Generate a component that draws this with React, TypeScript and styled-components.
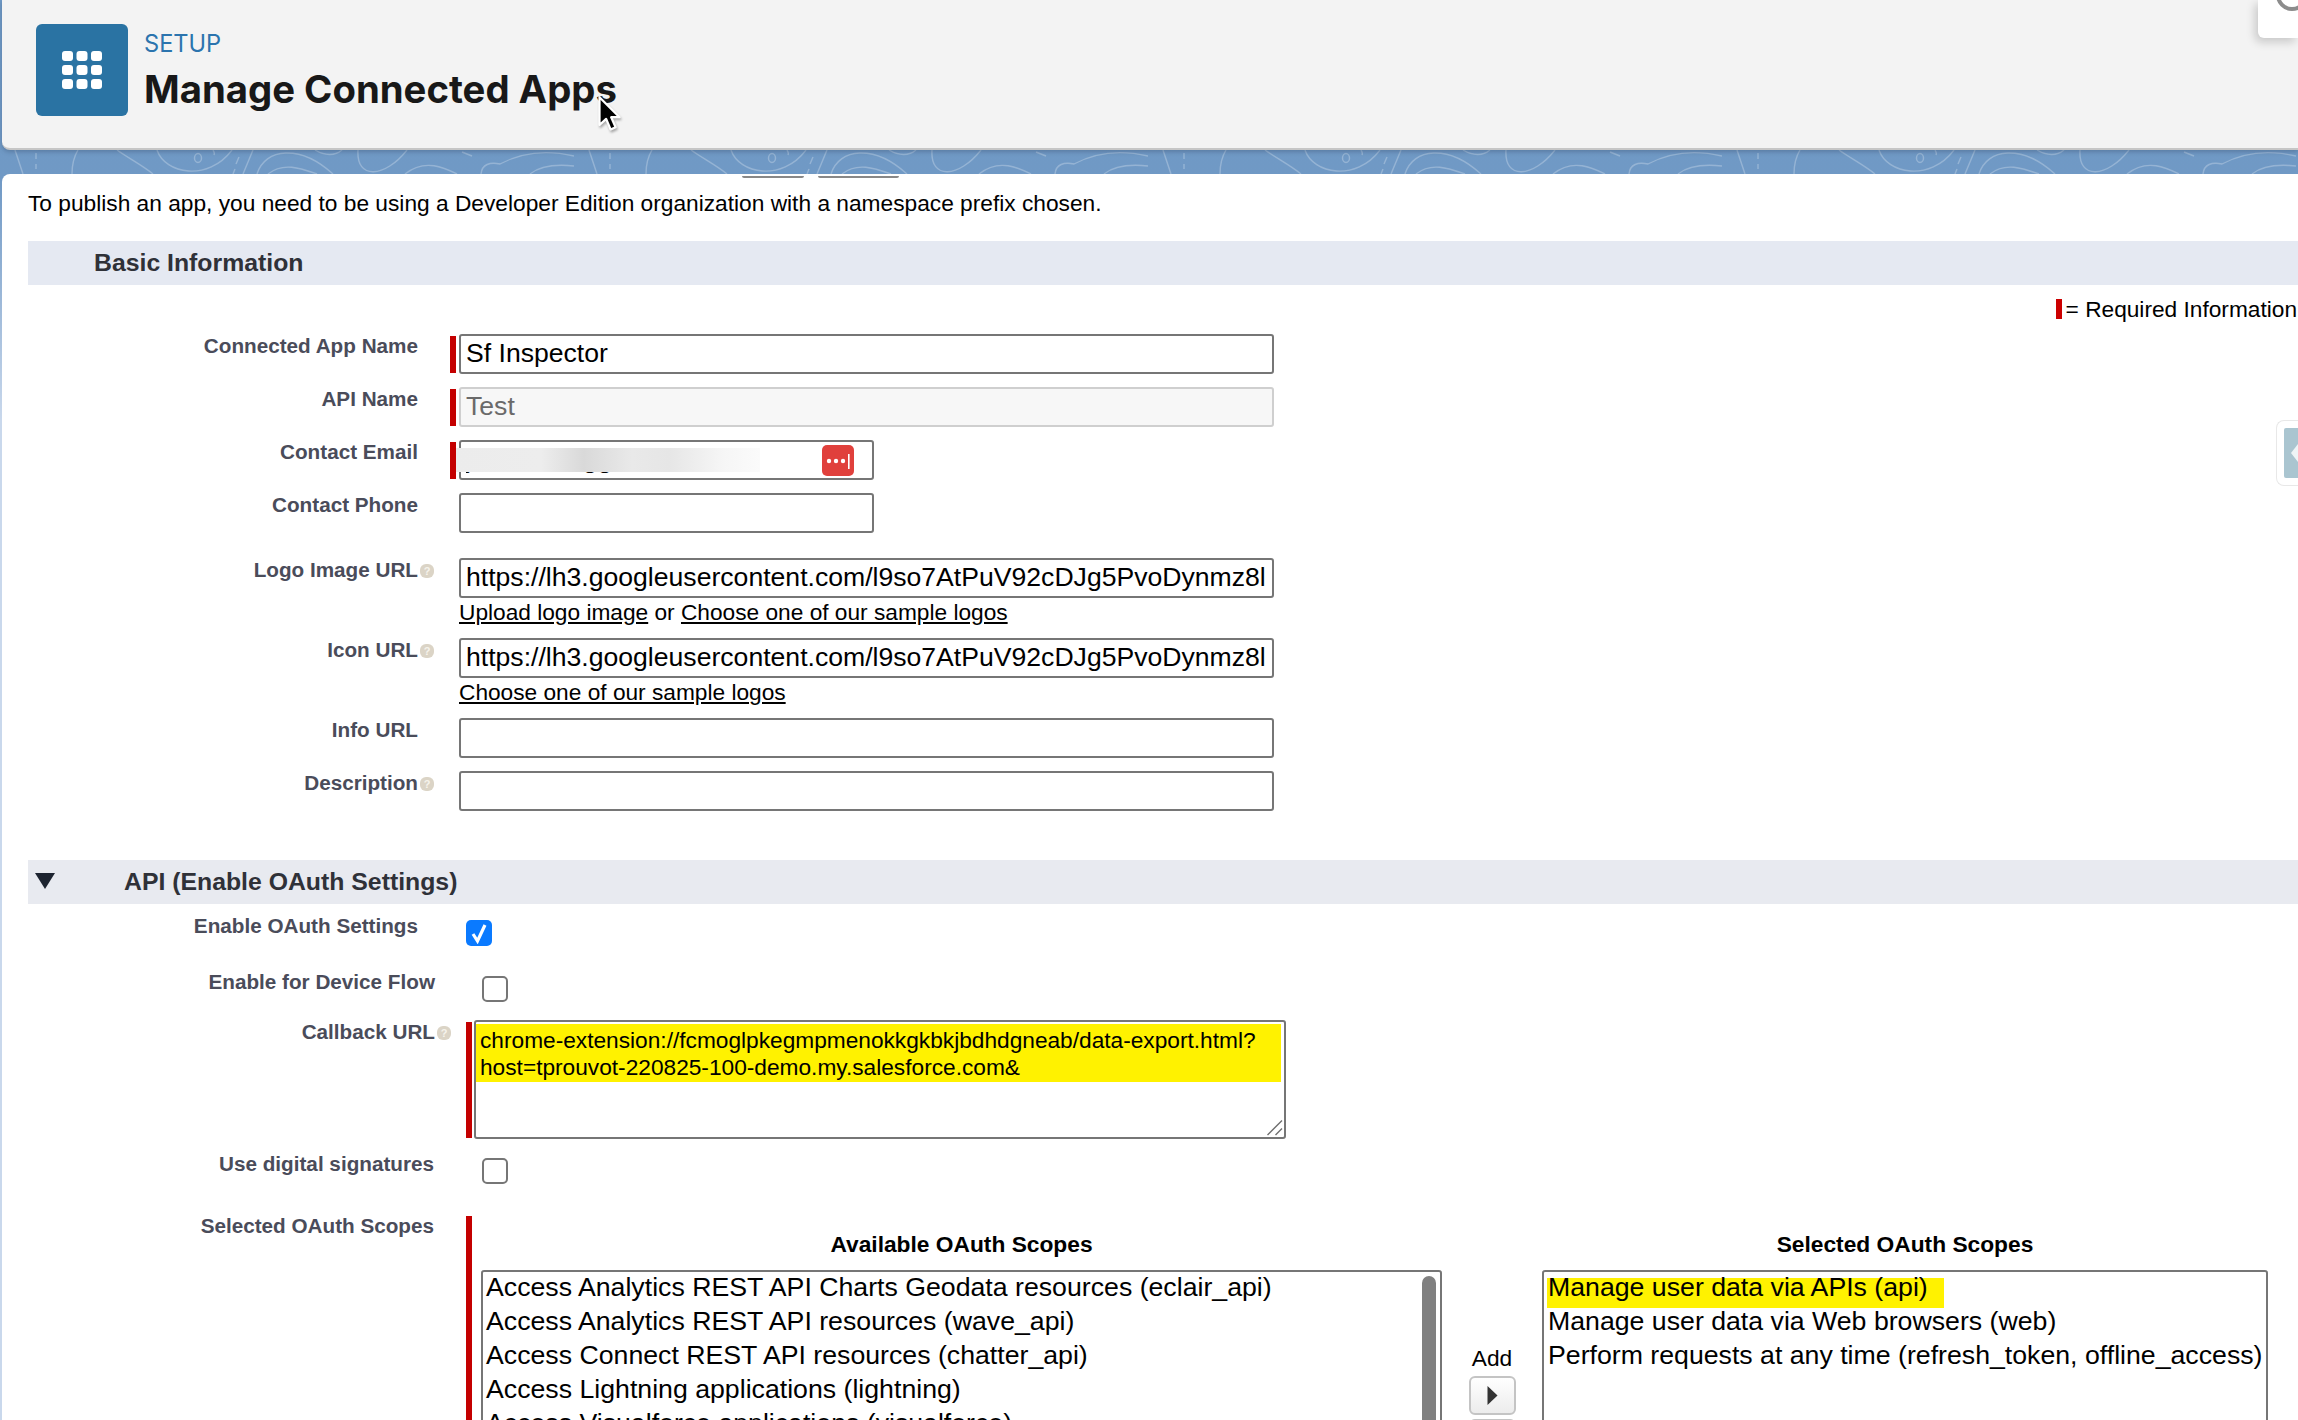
import React from "react";
import styled, { createGlobalStyle } from "styled-components";

const Global = createGlobalStyle`
  html, body { margin: 0; padding: 0; }
  body { font-family: "Liberation Sans", Arial, sans-serif; color: #000; overflow: hidden; }
  * { box-sizing: border-box; }
`;

const Page = styled.div`
  position: relative;
  width: 2298px;
  height: 1420px;
  overflow: hidden;
  background: linear-gradient(#6f9ac6 0, #7099c5 180px, #c9d8ec 420px);
`;

const HeaderCard = styled.header`
  position: relative;
  z-index: 1;
  display: flex;
  align-items: flex-start;
  gap: 16px;
  height: 150px;
  margin-left: 2px;
  padding: 24px 34px;
  background: #f3f3f3;
  border-bottom: 2px solid #c6c6c6;
  border-bottom-left-radius: 8px;
  box-shadow: 0 2px 4px rgba(50, 70, 100, 0.35);
`;

const AppTile = styled.div`
  display: flex;
  align-items: center;
  justify-content: center;
  width: 92px;
  height: 92px;
  border-radius: 6px;
  background: #2a73a3;
`;

const TitleBlock = styled.div`
  display: flex;
  flex-direction: column;
`;

const Eyebrow = styled.div`
  font-family: Inter, "Liberation Sans", sans-serif;
  font-size: 23.6px;
  font-weight: 400;
  line-height: 28px;
  margin-top: 6px;
  color: #2b74ae;
`;

const PageTitle = styled.h1`
  margin: 7px 0 0;
  font-family: Inter, "Liberation Sans", sans-serif;
  font-size: 38.3px;
  line-height: 48px;
  font-weight: 700;
  color: #181818;
`;

const CornerCard = styled.div`
  position: absolute;
  top: 0;
  right: 0;
  width: 40px;
  height: 38px;
  background: #fff;
  border-bottom-left-radius: 6px;
  box-shadow: -3px 4px 10px rgba(0, 0, 0, 0.18);
  overflow: hidden;
`;

const Cursor = styled.svg`
  position: absolute;
  left: 594px;
  top: 95px;
  filter: drop-shadow(1px 2px 1px rgba(0, 0, 0, 0.3));
`;

const Strip = styled.svg`
  display: block;
  width: 100%;
  height: 24px;
`;

const Panel = styled.main`
  position: relative;
  height: 1246px;
  margin-left: 2px;
  padding-left: 26px;
  background: #fff;
  border-top-left-radius: 8px;
`;

const StubRow = styled.div`
  display: flex;
  gap: 14px;
  height: 4px;
  padding: 2px 0 0 714px;
`;

const Stub = styled.div<{ $w: number }>`
  width: ${(p) => p.$w}px;
  height: 2px;
  background: #888;
  border-radius: 0 0 3px 3px;
`;

const Intro = styled.p`
  margin: 10px 0 0;
  font-size: 22.72px;
  line-height: 31px;
`;

const SectionBar = styled.div<{ $gap: number; $tone: string; $top: number }>`
  display: flex;
  align-items: center;
  height: 44px;
  margin-top: ${(p) => p.$top}px;
  padding-left: ${(p) => p.$gap}px;
  background: ${(p) => p.$tone};
`;

const SectionTitle = styled.h2`
  margin: 0;
  font-size: 24.8px;
  line-height: 30px;
  font-weight: 700;
  color: #2f3138;
`;

const Twist = styled.svg`
  margin: -2px 69px 0 -89px;
`;

const Required = styled.div`
  display: flex;
  align-items: center;
  justify-content: flex-end;
  gap: 4px;
  height: 24px;
  margin-top: 12px;
  padding-right: 1px;
  font-size: 22.7px;
`;

const RequiredMark = styled.span`
  width: 6px;
  height: 20px;
  background: #cc0000;
`;

const Row = styled.div<{ $top: number }>`
  display: flex;
  align-items: flex-start;
  margin-top: ${(p) => p.$top}px;
`;

const Label = styled.label<{ $w: number }>`
  flex: none;
  width: ${(p) => p.$w}px;
  text-align: right;
  font-size: 20.7px;
  line-height: 24px;
  font-weight: 700;
  color: #4a4c5a;
`;

const HelpSlot = styled.div<{ $w: number }>`
  flex: none;
  width: ${(p) => p.$w}px;
  padding: 6px 0 0 2px;
`;

const Help = styled.span`
  display: flex;
  align-items: center;
  justify-content: center;
  width: 14px;
  height: 14px;
  border-radius: 6px;
  background: #dbd4c6;
  color: #f6f3ec;
  font-size: 11px;
  font-weight: 700;
`;

const Marker = styled.div<{ $on?: boolean; $h: number; $top?: number }>`
  flex: none;
  width: 6px;
  height: ${(p) => p.$h}px;
  margin-top: ${(p) => p.$top ?? 2}px;
  background: ${(p) => (p.$on === false ? "transparent" : "#c40000")};
`;

const Field = styled.div<{ $left?: number }>`
  position: relative;
  margin-left: ${(p) => p.$left ?? 3}px;
`;

const TextInput = styled.input<{ $w: number }>`
  display: block;
  width: ${(p) => p.$w}px;
  height: 40px;
  padding: 0 5px 2px;
  border: 2px solid #767676;
  border-radius: 3px;
  background: #fff;
  font-family: "Liberation Sans", Arial, sans-serif;
  font-size: 26.6px;
  color: #000;
  outline: none;
  &:disabled {
    border-color: #cfcfcf;
    background: #f7f7f7;
    color: #6a6a6a;
  }
`;

const Blur = styled.div`
  position: absolute;
  left: -3px;
  top: 8px;
  width: 304px;
  height: 24px;
  background: linear-gradient(90deg, #ececec, #ededed 28%, #d9d9d9 42%, #e9e9e9 58%, #e6e6e6 70%, #f6f6f6 88%, #fbfbfb);
`;

const VaultIcon = styled.svg`
  position: absolute;
  left: 363px;
  top: 5px;
`;

const LinkLine = styled.div`
  height: 28px;
  font-size: 22.7px;
  line-height: 28px;
`;

const TextLink = styled.a`
  color: #000;
  text-decoration: underline;
`;

const CheckBox = styled.span<{ $on?: boolean; $x: number }>`
  flex: none;
  display: flex;
  align-items: center;
  justify-content: center;
  width: 26px;
  height: 26px;
  margin: 6px 0 0 ${(p) => p.$x}px;
  border-radius: 5px;
  border: ${(p) => (p.$on ? "none" : "2px solid #767676")};
  background: ${(p) => (p.$on ? "#0a7aff" : "#fff")};
`;

const Callback = styled.textarea`
  display: block;
  width: 812px;
  height: 119px;
  padding: 5px 4px;
  border: 2px solid #767676;
  border-radius: 3px;
  outline: none;
  resize: none;
  white-space: pre;
  overflow: hidden;
  font-family: "Liberation Sans", Arial, sans-serif;
  font-size: 22.7px;
  line-height: 27px;
  color: #000;
  background: linear-gradient(#fff200, #fff200) no-repeat -2px 2px / 807px 58px, #fff;
`;

const Grip = styled.svg`
  position: absolute;
  right: 3px;
  bottom: 3px;
`;

const Scopes = styled.div`
  display: flex;
  margin-left: 9px;
`;

const ScopeColumn = styled.div<{ $w: number }>`
  flex: none;
  width: ${(p) => p.$w}px;
  padding-top: 18px;
`;

const ScopeTitle = styled.div`
  height: 24px;
  margin-bottom: 14px;
  text-align: center;
  font-size: 22.76px;
  line-height: 24px;
  font-weight: 700;
`;

const ListBox = styled.div<{ $inset: number }>`
  position: relative;
  height: 300px;
  padding: 0 ${(p) => p.$inset}px;
  border: 2px solid #767676;
  border-radius: 3px;
  overflow: hidden;
  background: #fff;
`;

const Option = styled.div`
  height: 34px;
  font-size: 26.7px;
  line-height: 30px;
  white-space: nowrap;
`;

const Marked = styled.span`
  display: block;
  width: 397px;
  height: 36px;
  margin-left: -1px;
  padding-left: 1px;
  background: linear-gradient(transparent 6px, #fff200 6px);
`;

const ScrollThumb = styled.div`
  position: absolute;
  right: 4px;
  top: 4px;
  width: 14px;
  height: 280px;
  border-radius: 7px;
  background: #808080;
`;

const MoveColumn = styled.div`
  flex: none;
  display: flex;
  flex-direction: column;
  align-items: center;
  gap: 4px;
  width: 100px;
  padding-top: 132px;
`;

const MoveLabel = styled.div`
  height: 24px;
  margin-bottom: 2px;
  font-size: 22.7px;
  line-height: 24px;
`;

const MoveButton = styled.button`
  display: flex;
  align-items: center;
  justify-content: center;
  flex: none;
  width: 47px;
  height: 39px;
  padding: 0;
  border: 2px solid #c4c4c4;
  border-radius: 6px;
  background: linear-gradient(#ffffff, #ececec);
`;

const SideHandle = styled.div`
  position: absolute;
  right: 0;
  top: 246px;
  display: flex;
  justify-content: flex-end;
  width: 22px;
  height: 66px;
  padding: 7px 0;
  background: #fff;
  border: 1px solid #e8e8e8;
  border-right: none;
  border-radius: 8px 0 0 8px;
`;

const SideTab = styled.div`
  display: flex;
  align-items: center;
  width: 14px;
  padding-left: 7px;
  background: #aac5d0;
  border-radius: 2px 0 0 2px;
`;

const SideArrow = styled.span`
  width: 0;
  height: 0;
  border-style: solid;
  border-width: 9px 7px 9px 0;
  border-color: transparent #eef4f6 transparent transparent;
`;

const URL_VALUE = "https://lh3.googleusercontent.com/l9so7AtPuV92cDJg5PvoDynmz8l";
const CALLBACK =
  "chrome-extension://fcmoglpkegmpmenokkgkbkjbdhdgneab/data-export.html?\nhost=tprouvot-220825-100-demo.my.salesforce.com&";

const AVAILABLE = [
  "Access Analytics REST API Charts Geodata resources (eclair_api)",
  "Access Analytics REST API resources (wave_api)",
  "Access Connect REST API resources (chatter_api)",
  "Access Lightning applications (lightning)",
  "Access Visualforce applications (visualforce)",
];

const grid = [0, 1, 2].flatMap((r) => [0, 1, 2].map((c) => ({ r, c })));

const StripPattern = () => (
  <Strip xmlns="http://www.w3.org/2000/svg">
    <defs>
      <pattern id="contours" x="0" y="0" width="574" height="24" patternUnits="userSpaceOnUse">
        <g fill="none" stroke="#ffffff" strokeOpacity="0.26" strokeWidth="1.4">
          <path d="M15 0 L23 24" />
          <path d="M36 3 V9 M36 14 V19" />
          <path d="M78 0 Q72 10 72 24" />
          <path d="M117 0 C128 8 142 15 153 24" />
          <path d="M157 0 C165 24 208 32 232 0" />
          <ellipse cx="198" cy="8" rx="3.5" ry="4.5" />
          <path d="M213 0 q2 3 1 5" />
          <path d="M239 7 L236 14 M235 19 L233 24" />
          <path d="M253 0 L243 24" />
          <path d="M257 24 C265 -2 300 -6 333 24" />
          <path d="M268 24 C283 12 300 18 317 24" />
          <path d="M315 0 C325 6 335 6 342 0" />
          <path d="M358 0 C356 30 385 28 407 0" />
          <path d="M405 24 C425 8 445 18 457 24" />
          <path d="M462 2 L472 6" />
          <path d="M481 24 C482 14 490 12 500 14 C515 6 540 -2 574 6" />
          <path d="M530 24 C540 16 555 14 574 16" />
        </g>
      </pattern>
    </defs>
    <rect width="100%" height="24" fill="url(#contours)" />
  </Strip>
);

const HelpDot = () => <Help>?</Help>;

export default function App() {
  return (
    <Page>
      <Global />
      <HeaderCard>
        <AppTile>
          <svg width="40" height="38" viewBox="0 0 40 38">
            {grid.map(({ r, c }) => (
              <rect key={`${r}-${c}`} x={c * 14.5} y={r * 14} width="11" height="10" rx="3" fill="#fff" />
            ))}
          </svg>
        </AppTile>
        <TitleBlock>
          <Eyebrow>SETUP</Eyebrow>
          <PageTitle>Manage Connected Apps</PageTitle>
        </TitleBlock>
        <CornerCard>
          <svg width="40" height="38" viewBox="0 0 40 38">
            <circle cx="34" cy="-5" r="14" fill="none" stroke="#8c8c8c" strokeWidth="4" />
          </svg>
        </CornerCard>
        <Cursor width="27" height="40" viewBox="0 0 24 36">
          <path d="M3 2 V27 L9 21.5 L13 31 L17.5 29 L13.5 20 H21 Z" fill="#000" stroke="#fff" strokeWidth="2" strokeLinejoin="round" />
        </Cursor>
      </HeaderCard>
      <StripPattern />
      <Panel>
        <StubRow>
          <Stub $w={62} />
          <Stub $w={81} />
        </StubRow>
        <Intro>To publish an app, you need to be using a Developer Edition organization with a namespace prefix chosen.</Intro>

        <SectionBar $gap={66} $tone="#e5e9f2" $top={22}>
          <SectionTitle>Basic Information</SectionTitle>
        </SectionBar>
        <Required>
          <RequiredMark />= Required Information
        </Required>

        <Row $top={13}>
          <Label $w={390}>Connected App Name</Label>
          <HelpSlot $w={32} />
          <Marker $h={37} />
          <Field>
            <TextInput $w={815} readOnly value="Sf Inspector" />
          </Field>
        </Row>
        <Row $top={13}>
          <Label $w={390}>API Name</Label>
          <HelpSlot $w={32} />
          <Marker $h={37} />
          <Field>
            <TextInput $w={815} disabled value="Test" />
          </Field>
        </Row>
        <Row $top={13}>
          <Label $w={390}>Contact Email</Label>
          <HelpSlot $w={32} />
          <Marker $h={37} />
          <Field>
            <TextInput $w={415} readOnly value={"j\u00a0\u00a0\u00a0\u00a0\u00a0\u00a0\u00a0\u00a0\u00a0\u00a0\u00a0\u00a0\u00a0\u00a0\u00a0gg"} />
            <Blur />
            <VaultIcon width="32" height="31" viewBox="0 0 32 31">
              <rect width="32" height="31" rx="5" fill="#e0403c" />
              <circle cx="7" cy="16" r="2.2" fill="#fff" />
              <circle cx="14" cy="16" r="2.2" fill="#fff" />
              <circle cx="21" cy="16" r="2.2" fill="#fff" />
              <rect x="26" y="9" width="1.6" height="15" fill="#fff" />
            </VaultIcon>
          </Field>
        </Row>
        <Row $top={13}>
          <Label $w={390}>Contact Phone</Label>
          <HelpSlot $w={32} />
          <Marker $on={false} $h={37} />
          <Field>
            <TextInput $w={415} readOnly value="" />
          </Field>
        </Row>
        <Row $top={25}>
          <Label $w={390}>Logo Image URL</Label>
          <HelpSlot $w={32}>
            <HelpDot />
          </HelpSlot>
          <Marker $on={false} $h={37} />
          <Field>
            <TextInput $w={815} readOnly value={URL_VALUE} />
            <LinkLine>
              <TextLink href="#">Upload logo image</TextLink> or <TextLink href="#">Choose one of our sample logos</TextLink>
            </LinkLine>
          </Field>
        </Row>
        <Row $top={12}>
          <Label $w={390}>Icon URL</Label>
          <HelpSlot $w={32}>
            <HelpDot />
          </HelpSlot>
          <Marker $on={false} $h={37} />
          <Field>
            <TextInput $w={815} readOnly value={URL_VALUE} />
            <LinkLine>
              <TextLink href="#">Choose one of our sample logos</TextLink>
            </LinkLine>
          </Field>
        </Row>
        <Row $top={12}>
          <Label $w={390}>Info URL</Label>
          <HelpSlot $w={32} />
          <Marker $on={false} $h={37} />
          <Field>
            <TextInput $w={815} readOnly value="" />
          </Field>
        </Row>
        <Row $top={13}>
          <Label $w={390}>Description</Label>
          <HelpSlot $w={32}>
            <HelpDot />
          </HelpSlot>
          <Marker $on={false} $h={37} />
          <Field>
            <TextInput $w={815} readOnly value="" />
          </Field>
        </Row>

        <SectionBar $gap={96} $tone="#e8eaf0" $top={49}>
          <Twist width="20" height="16" viewBox="0 0 20 16">
            <path d="M0 0 H20 L10 16 Z" fill="#1d2430" />
          </Twist>
          <SectionTitle>API (Enable OAuth Settings)</SectionTitle>
        </SectionBar>

        <Row $top={10}>
          <Label $w={390}>Enable OAuth Settings</Label>
          <CheckBox $on $x={48}>
            <svg width="18" height="22" viewBox="0 0 18 22">
              <path d="M3 12 L7.5 19 L15 3" fill="none" stroke="#fff" strokeWidth="3.2" />
            </svg>
          </CheckBox>
        </Row>
        <Row $top={24}>
          <Label $w={407}>Enable for Device Flow</Label>
          <CheckBox $x={47} />
        </Row>
        <Row $top={18}>
          <Label $w={407}>Callback URL</Label>
          <HelpSlot $w={31}>
            <HelpDot />
          </HelpSlot>
          <Marker $h={116} />
          <Field $left={2}>
            <Callback readOnly defaultValue={CALLBACK} />
            <Grip width="16" height="16" viewBox="0 0 16 16">
              <path d="M0.5 15 L15 0.5 M8.5 15 L15 8.5" stroke="#6f6f6f" strokeWidth="1.4" fill="none" />
            </Grip>
          </Field>
        </Row>
        <Row $top={13}>
          <Label $w={406}>Use digital signatures</Label>
          <CheckBox $x={48} />
        </Row>
        <Row $top={30}>
          <Label $w={406}>Selected OAuth Scopes</Label>
          <HelpSlot $w={32} />
          <Marker $h={320} />
          <Scopes>
            <ScopeColumn $w={961}>
              <ScopeTitle>Available OAuth Scopes</ScopeTitle>
              <ListBox $inset={3}>
                {AVAILABLE.map((s) => (
                  <Option key={s}>{s}</Option>
                ))}
                <ScrollThumb />
              </ListBox>
            </ScopeColumn>
            <MoveColumn>
              <MoveLabel>Add</MoveLabel>
              <MoveButton aria-label="Add">
                <svg width="11" height="19" viewBox="0 0 11 19">
                  <path d="M0.5 0 L10.5 9.5 L0.5 19 Z" fill="#333" />
                </svg>
              </MoveButton>
              <MoveButton aria-label="Remove" />
            </MoveColumn>
            <ScopeColumn $w={726}>
              <ScopeTitle>Selected OAuth Scopes</ScopeTitle>
              <ListBox $inset={4}>
                <Option>
                  <Marked>Manage user data via APIs (api)</Marked>
                </Option>
                <Option>Manage user data via Web browsers (web)</Option>
                <Option>Perform requests at any time (refresh_token, offline_access)</Option>
              </ListBox>
            </ScopeColumn>
          </Scopes>
        </Row>
        <SideHandle>
          <SideTab>
            <SideArrow />
          </SideTab>
        </SideHandle>
      </Panel>
    </Page>
  );
}
